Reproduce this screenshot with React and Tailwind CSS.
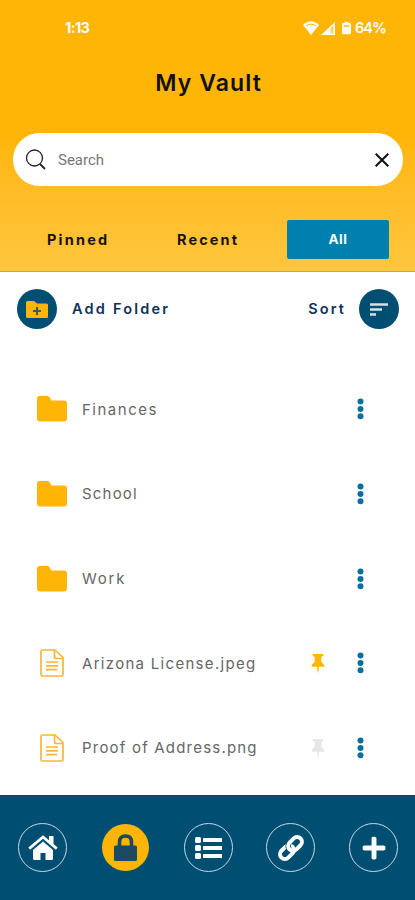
import React from 'react';
import { FaPlus } from 'react-icons/fa';

const files = [
  { name: 'Finances', type: 'folder', tracking: 'tracking-[1.5px]' },
  { name: 'School', type: 'folder', tracking: 'tracking-[1.2px]' },
  { name: 'Work', type: 'folder', tracking: 'tracking-[1.8px]' },
  { name: 'Arizona License.jpeg', type: 'file', pinned: true, tracking: 'tracking-[1.3px]' },
  { name: 'Proof of Address.png', type: 'file', pinned: false, tracking: 'tracking-[1.2px]' },
];

const StatusBar = () => (
  <div className="flex h-14 items-center justify-between pl-[65px] pr-[29px] text-white">
    <span className="text-[14.5px] font-bold tracking-[-0.6px]">1:13</span>
    <div className="flex items-center">
      <svg width="16" height="14" viewBox="0 0 16 14" fill="currentColor">
        <path d="M0 4Q8-3.5 16 4L8 14Z" />
        <path d="M3 4.8Q8 1.5 13 4.8" fill="none" stroke="#ffb505" strokeWidth="1" />
      </svg>
      <svg className="ml-0.5" width="14" height="13" viewBox="0 0 14 13" fill="currentColor">
        <path d="M0 13L14 0V13Z" />
        <path d="M9.5 6L12.5 3.2V11.5H9.5Z" fill="#ffb505" opacity=".6" />
      </svg>
      <svg className="ml-[7px]" width="9" height="14" viewBox="0 0 10 14" fill="currentColor">
        <path d="M3 0H7V1.5H8.5Q10 1.5 10 3V12.5Q10 14 8.5 14H1.5Q0 14 0 12.5V3Q0 1.5 1.5 1.5H3Z" />
        <path d="M2 3.5H8V6H2Z" fill="#ffb505" opacity=".7" />
      </svg>
      <span className="ml-1 text-[14.5px] font-semibold tracking-[-0.8px]">64%</span>
    </div>
  </div>
);

const SearchBar = () => (
  <div className="ml-[13px] mr-3 flex h-[53px] items-center rounded-full bg-white pl-3 pr-[14px]">
    <svg width="21" height="21" viewBox="0 0 21 21" fill="none" stroke="#222" strokeWidth="1.3">
      <circle cx="9.5" cy="9" r="8" />
      <path d="M15 15L20 20" strokeWidth="1.8" />
    </svg>
    <span className="ml-3 flex-1 pt-0.5 font-['Roboto'] text-[15px] text-[#777]">Search</span>
    <svg width="14" height="14" viewBox="0 0 14 14" stroke="#111" strokeWidth="2">
      <path d="M.7 .7L13.3 13.3M13.3 .7L.7 13.3" />
    </svg>
  </div>
);

const Header = () => (
  <header className="h-[272px] border-b border-[#b5aa88] bg-linear-to-b from-[#ffb505] from-50% to-[#ffc63c]">
    <StatusBar />
    <h1 className="h-[77px] pt-[11px] pl-0.5 text-center text-[23px] leading-[32px] font-semibold tracking-[1.1px] text-[#111]">My Vault</h1>
    <SearchBar />
    <div className="mt-[33px] flex h-10 items-center text-[14.5px] font-bold text-[#17130a]">
      <span className="w-[130px] pl-[47px] pt-0.5 tracking-[2.2px]">Pinned</span>
      <span className="w-[157px] pl-[47px] pt-0.5 tracking-[2.1px]">Recent</span>
      <button className="h-[39px] w-[102px] rounded-xs bg-[#0080ae] pt-px text-[13.5px] tracking-[0.6px] text-white">All</button>
    </div>
  </header>
);

const Toolbar = () => (
  <div className="flex h-[74px] items-center pl-[17px] pr-4 text-[14.5px] font-semibold text-[#10305a]">
    <div className="flex size-10 items-center justify-center rounded-full bg-[#004f73]">
      <svg width="22" height="17" viewBox="0 0 22 17">
        <path d="M1.5 0H8L11 2.5H20.5Q22 2.5 22 4V15.5Q22 17 20.5 17H1.5Q0 17 0 15.5V1.5Q0 0 1.5 0Z" fill="#ffb505" />
        <path d="M11 6V14M7 10H15" stroke="#3d5a55" strokeWidth="2" />
      </svg>
    </div>
    <span className="ml-[15px] flex-1 tracking-[2.2px]">Add Folder</span>
    <span className="mr-[13px] tracking-[2.1px]">Sort</span>
    <div className="flex size-10 items-center justify-center rounded-full bg-[#004f73]">
      <svg width="18" height="13" viewBox="0 0 18 13" stroke="#d5e0e8" strokeWidth="2.4">
        <path d="M0 1.5H18M0 6.5H12M0 11.5H6" />
      </svg>
    </div>
  </div>
);

const FolderIcon = () => (
  <svg width="30" height="26" viewBox="0 0 30 26" fill="#ffb505">
    <path d="M2.5 0H10.5Q12 0 12.8 1.5L14.3 4.5H27Q30 4.5 30 7.5V22.5Q30 25.5 27 25.5H3Q0 25.5 0 22.5V3Q0 0 2.5 0Z" />
  </svg>
);

const FileIcon = () => (
  <svg className="ml-[3px]" width="24" height="28" viewBox="0 0 24 28" fill="none" stroke="#fcb53b" strokeWidth="1.7">
    <path d="M2.5 1H15L23 8.5V25.5Q23 27 21.5 27H2.5Q1 27 1 25.5V2.5Q1 1 2.5 1Z" />
    <path d="M14.5 1V7.5Q14.5 9.5 16.5 9.5H23" />
    <path d="M6 13H18M6 16.8H18M6 20.6H17" />
  </svg>
);

const PinIcon = ({ active }) => (
  <svg width="14" height="19" viewBox="0 0 14 20" className={active ? 'mt-px text-[#ffb505]' : 'mt-px text-[#e7e7e7]'} fill="currentColor">
    <path d="M1.5 0H12.5V2L10.5 3V8.5Q13.5 10 14 13.5H8L7.3 19.5H6.7L6 13.5H0Q.5 10 3.5 8.5V3L1.5 2Z" />
  </svg>
);

const FileRow = ({ file }) => (
  <div className="flex h-[84.7px] items-center pl-[37px] pr-[51px]">
    <div className="w-[45px]">{file.type === 'folder' ? <FolderIcon /> : <FileIcon />}</div>
    <span className={`flex-1 pt-px text-[15px] text-[#666] ${file.tracking}`}>{file.name}</span>
    {file.type === 'file' && <PinIcon active={file.pinned} />}
    <svg className="ml-8" width="7" height="22" viewBox="0 0 7 22" fill="#08709e">
      <circle cx="3.5" cy="3.5" r="3" />
      <circle cx="3.5" cy="11" r="3" />
      <circle cx="3.5" cy="18.3" r="3" />
    </svg>
  </div>
);

const HomeIcon = () => (
  <svg width="30" height="25" viewBox="0 0 30 25" fill="currentColor">
    <path d="M5 15L15 6.5L25 15V23.5Q25 25 23.5 25H17.5V18H12.5V25H6.5Q5 25 5 23.5Z" />
    <path d="M1.2 13.6L15 2L28.8 13.6" fill="none" stroke="currentColor" strokeWidth="2.7" />
    <path d="M21 1H25.5V10L21 6.5Z" />
  </svg>
);

const LockIcon = () => (
  <svg width="23" height="27" viewBox="0 0 23 27" fill="currentColor">
    <rect y="11.5" width="23" height="15.5" rx="1.5" />
    <path d="M5.5 13V8Q5.5 2 11.5 2T17.5 8V13" fill="none" stroke="currentColor" strokeWidth="3.6" />
  </svg>
);

const ListIcon = () => (
  <svg width="27" height="22" viewBox="0 0 27 22" fill="currentColor">
    <rect width="6" height="6" y="0" rx="1.5" />
    <rect width="6" height="6" y="8" rx="1.5" />
    <rect width="6" height="6" y="16" rx="1.5" />
    <rect width="19" height="4" x="8" y="1" rx=".5" />
    <rect width="19" height="4" x="8" y="9" rx=".5" />
    <rect width="19" height="4" x="8" y="17" rx=".5" />
  </svg>
);

const LinkIcon = () => (
  <svg width="30" height="30" viewBox="0 0 30 30" fill="none" stroke="currentColor" strokeWidth="4">
    <g transform="rotate(-45 15 15)">
      <rect x="1.5" y="10.2" width="15.5" height="9.6" rx="4.8" />
      <rect x="13" y="10.2" width="15.5" height="9.6" rx="4.8" stroke="#004f73" strokeWidth="5.6" strokeDasharray="9 100" strokeDashoffset="-34" />
      <rect x="13" y="10.2" width="15.5" height="9.6" rx="4.8" />
    </g>
  </svg>
);

const NavItem = ({ children, active }) => (
  <button className={`flex items-center justify-center rounded-full ${active ? 'm-px size-[47px] bg-[#ffb505] text-[#1b4a62]' : 'size-[49px] border-[1.5px] border-[#c6d8e5] text-white'}`}>
    {children}
  </button>
);

const App = () => (
  <div className="flex h-[900px] w-[415px] flex-col overflow-hidden bg-white font-['Inter',sans-serif]">
    <Header />
    <Toolbar />
    <main className="h-[449px] pt-[21px]">
      {files.map(file => (
        <FileRow key={file.name} file={file} />
      ))}
    </main>
    <nav className="flex h-[105px] items-center justify-between bg-[#004f73] pl-[18px] pr-[17px]">
      <NavItem><HomeIcon /></NavItem>
      <NavItem active><LockIcon /></NavItem>
      <NavItem><ListIcon /></NavItem>
      <NavItem><LinkIcon /></NavItem>
      <NavItem><FaPlus size={26} /></NavItem>
    </nav>
  </div>
);

export default App;
